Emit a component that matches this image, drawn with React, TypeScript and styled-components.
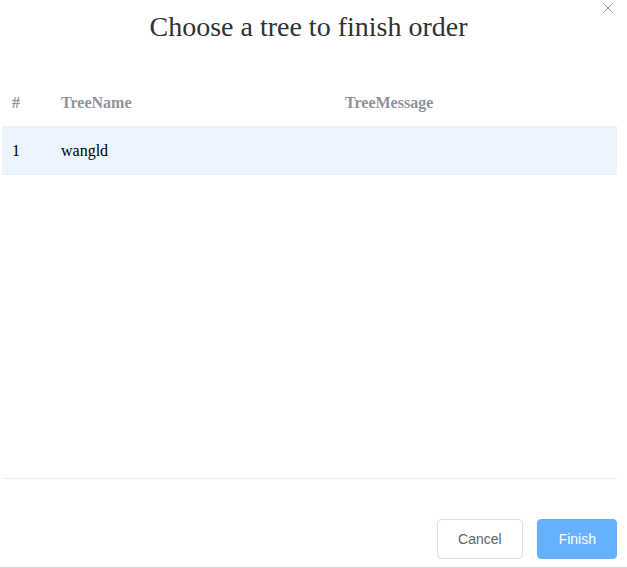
import React from "react";
import styled, { createGlobalStyle } from "styled-components";

const Global = createGlobalStyle`
  html, body { margin: 0; padding: 0; background: #fff; }
  body { font-family: "Liberation Serif", serif; }
`;

const Page = styled.div`
  position: relative;
  width: 627px;
  height: 568px;
  box-sizing: border-box;
  border-bottom: 1px solid #d6d6d6;
  display: flex;
  flex-direction: column;
  padding: 0 10px 0 2px;
`;

const Close = styled.button`
  position: absolute;
  top: 1px;
  right: 12px;
  width: 14px;
  height: 14px;
  padding: 0;
  border: none;
  background: transparent;
  display: flex;
  align-items: center;
  justify-content: center;
  cursor: pointer;
`;

const Title = styled.h1`
  margin: 0;
  padding-top: 11px;
  height: 67px;
  box-sizing: border-box;
  text-align: center;
  font-family: "Liberation Serif", serif;
  font-weight: normal;
  font-size: 28px;
  line-height: 32px;
  color: #303133;
  padding-left: 0;
  padding-right: 2px;
`;

const Table = styled.div`
  display: flex;
  flex-direction: column;
  flex: 1;
`;

const Row = styled.div<{ $head?: boolean; $active?: boolean }>`
  display: grid;
  grid-template-columns: 49px 284px 1fr;
  height: 48px;
  box-sizing: border-box;
  align-items: center;
  background: ${(p) => (p.$active ? "#ecf5ff" : "#fff")};
  border-bottom: 1px solid #ebeef5;
  ${(p) => (p.$head ? "margin-top: 12px;" : "")}
`;

const Cell = styled.div<{ $head?: boolean }>`
  padding-left: 10px;
  font-family: "Liberation Serif", serif;
  font-size: 16px;
  font-weight: ${(p) => (p.$head ? "bold" : "normal")};
  color: ${(p) => (p.$head ? "#909399" : "#000")};
`;

const Spacer = styled.div`
  flex: 1;
`;

const Divider = styled.div`
  height: 1px;
  background: #ebeef5;
  margin-bottom: 40px;
`;

const Footer = styled.div`
  display: flex;
  justify-content: flex-end;
  gap: 14px;
  padding-bottom: 8px;
`;

const Button = styled.button<{ $primary?: boolean }>`
  height: 40px;
  box-sizing: border-box;
  padding: ${(p) => (p.$primary ? "0 20px 0 21px" : "0 20px")};
  border-radius: 4px;
  font-family: "Liberation Sans", Arial, sans-serif;
  font-size: 14px;
  border: 1px solid ${(p) => (p.$primary ? "#66b1ff" : "#dcdfe6")};
  background: ${(p) => (p.$primary ? "#66b1ff" : "#fff")};
  color: ${(p) => (p.$primary ? "#fff" : "#606266")};
  cursor: pointer;
`;

export default function App() {
  return (
    <>
      <Global />
      <Page>
        <Close aria-label="close">
          <svg width="12" height="12" viewBox="0 0 12 12">
            <path d="M1 1 L11 11 M11 1 L1 11" stroke="#909399" strokeWidth="1" fill="none" />
          </svg>
        </Close>
        <Title>Choose a tree to finish order</Title>
        <Table>
          <Row $head>
            <Cell $head>#</Cell>
            <Cell $head>TreeName</Cell>
            <Cell $head>TreeMessage</Cell>
          </Row>
          <Row $active>
            <Cell>1</Cell>
            <Cell>wangld</Cell>
            <Cell></Cell>
          </Row>
          <Spacer />
        </Table>
        <Divider />
        <Footer>
          <Button>Cancel</Button>
          <Button $primary>Finish</Button>
        </Footer>
      </Page>
    </>
  );
}
